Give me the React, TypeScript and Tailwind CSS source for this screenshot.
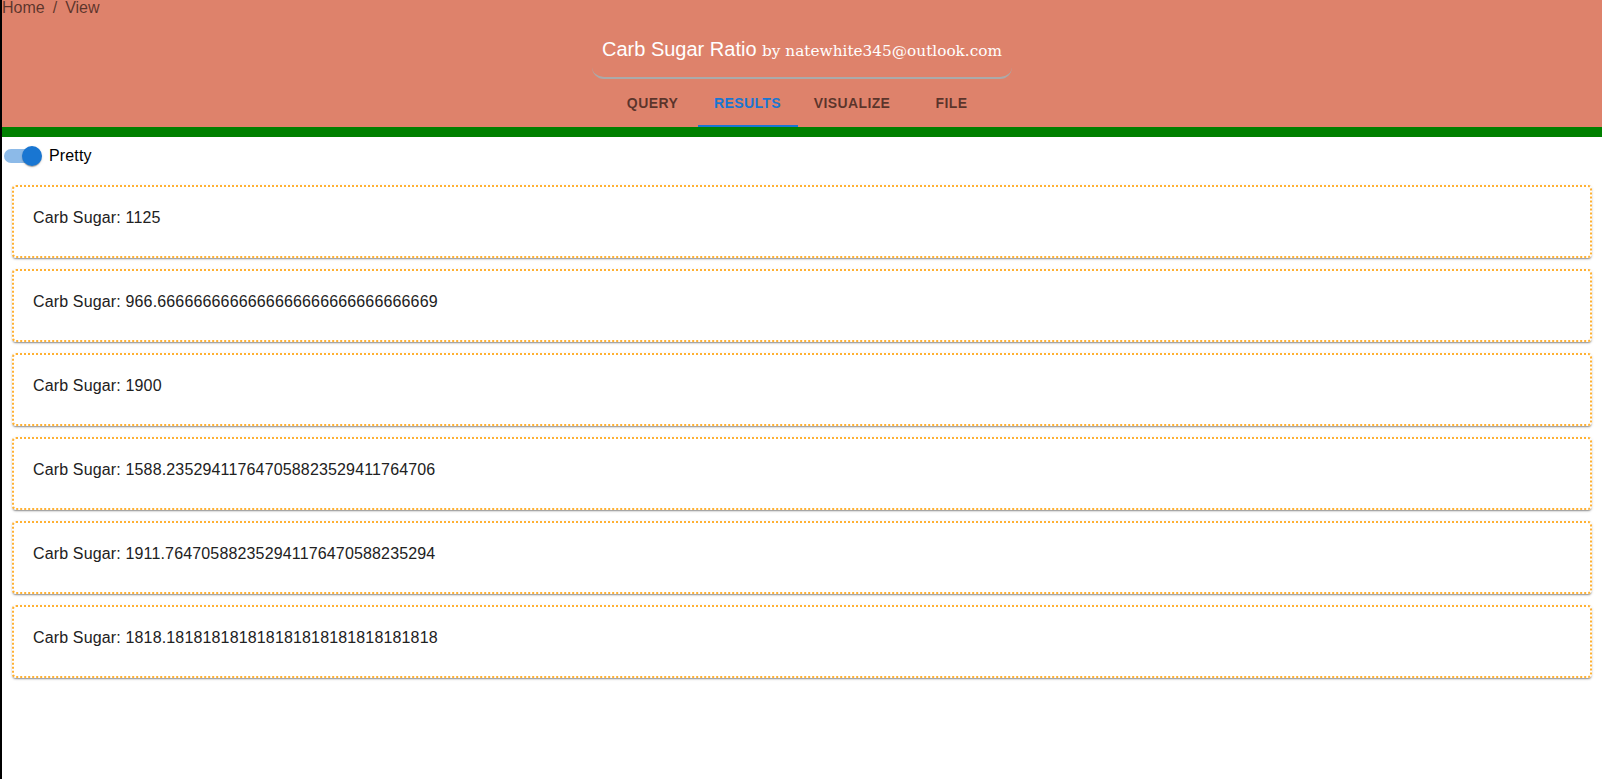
const results = [
  "1125",
  "966.6666666666666666666666666666669",
  "1900",
  "1588.235294117647058823529411764706",
  "1911.764705882352941176470588235294",
  "1818.181818181818181818181818181818",
];

const tabs = [
  { label: "Query", w: "w-[90px]" },
  { label: "Results", w: "w-[100px]", active: true },
  { label: "Visualize", w: "w-[109px]" },
  { label: "File", w: "w-[90px]" },
];

export default function App() {
  return (
    <div className="min-h-screen border-l-2 border-black bg-white font-['Liberation_Sans',Arial,sans-serif]">
      <header className="bg-[#de826b]">
        <nav className="flex h-4 items-center text-base leading-none text-black/60">
          <span>Home</span>
          <span className="mx-2">/</span>
          <span>View</span>
        </nav>
        <div className="flex justify-center">
          <div className="rounded-b-xl border-b-2 border-[#aaaaaa] px-[10px] pt-[19px] pb-[12px]">
            <h1 className="text-xl leading-7 text-white">
              Carb Sugar Ratio{" "}
              <span className="font-['DejaVu_Serif',serif] text-[15.3px]">by natewhite345@outlook.com</span>
            </h1>
          </div>
        </div>
        <div className="flex h-12 justify-center">
          {tabs.map((t) => (
            <button
              key={t.label}
              className={`${t.w} relative flex h-12 items-center justify-center text-sm font-bold uppercase tracking-[0.4px] ${
                t.active ? "text-[#1976d2]" : "text-black/60"
              }`}
            >
              {t.label}
              {t.active && <span className="absolute bottom-0 left-0 h-[2px] w-full bg-[#1976d2]" />}
            </button>
          ))}
        </div>
      </header>
      <div className="h-[10px] bg-[#008000]" />

      <div className="flex h-[38px] items-center">
        <div className="relative ml-[2px] h-5 w-[38px]">
          <div className="absolute left-0 top-[3px] h-[14px] w-[35px] rounded-full bg-[#1976d2]/50" />
          <div className="absolute left-[18px] top-0 h-5 w-5 rounded-full bg-[#1976d2] shadow-[0_2px_1px_-1px_rgba(0,0,0,0.2),0_1px_1px_0_rgba(0,0,0,0.14),0_1px_3px_0_rgba(0,0,0,0.12)]" />
        </div>
        <span className="ml-[7px] text-base tracking-[0.15px] text-black">Pretty</span>
      </div>

      <div className="mt-[10px] flex flex-col gap-[11px] pl-[10px] pr-[10px]">
        {results.map((r, i) => (
          <div
            key={i}
            className="h-[73px] rounded border-2 border-dotted border-[#ffb133] px-[19px] pt-[19px] shadow-[0_2px_2px_-1px_rgba(0,0,0,0.25),0_1px_1px_0_rgba(0,0,0,0.14),0_1px_3px_0_rgba(0,0,0,0.12)]"
          >
            <p className="text-base leading-6 tracking-[0.15px] text-[#212121]">Carb Sugar: {r}</p>
          </div>
        ))}
      </div>
    </div>
  );
}
